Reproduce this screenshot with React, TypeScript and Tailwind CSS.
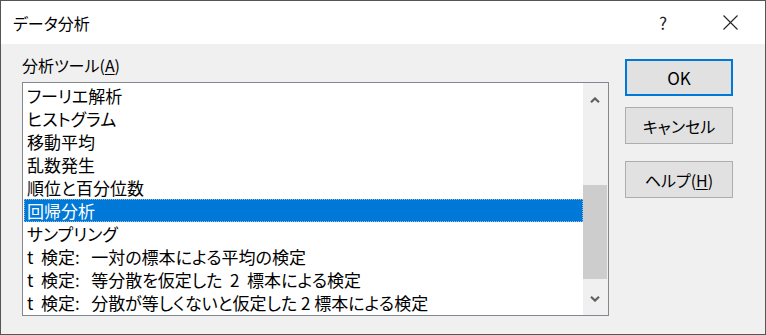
import React from 'react';

const items = [
  'フーリエ解析',
  'ヒストグラム',
  '移動平均',
  '乱数発生',
  '順位と百分位数',
  '回帰分析',
  'サンプリング',
  't  検定:   一対の標本による平均の検定',
  't  検定:   等分散を仮定した  2  標本による検定',
  't  検定:   分散が等しくないと仮定した 2 標本による検定',
];

const selected = 5;

const Chevron = ({ down }: { down?: boolean }) => (
  <svg width="10" height="6" viewBox="0 0 10 6" className={down ? 'rotate-180' : ''}>
    <polyline points="1,5.2 5,1.4 9,5.2" fill="none" stroke="#606060" strokeWidth="2.2" />
  </svg>
);

const Button = ({ children, primary }: { children: React.ReactNode; primary?: boolean }) => (
  <div
    className={
      primary
        ? 'flex h-[37px] w-[108px] items-center justify-center border-2 border-[#0078d7] bg-[#e1e1e1] text-[16px] text-black'
        : 'flex h-[37px] w-[108px] items-center justify-center border border-[#adadad] bg-[#e1e1e1] text-[16px] text-black'
    }
  >
    {children}
  </div>
);

export default function App() {
  return (
    <div className="flex h-[335px] w-[766px] flex-col border border-[#555] bg-[#f0f0f0] font-['Noto_Sans_CJK_JP','Noto_Sans',sans-serif] text-black [font-feature-settings:'palt']">
      {/* title bar */}
      <div className="flex h-[43px] shrink-0 items-center bg-white pl-[12px] pr-[27px]">
        <span className="flex-1 text-[16px] leading-none">データ分析</span>
        <span className="mr-[56px] text-[17px] leading-none text-[#222]">?</span>
        <svg width="15" height="15" viewBox="0 0 15 15">
          <path d="M0.5 0.5 L14.5 14.5 M14.5 0.5 L0.5 14.5" stroke="#222" strokeWidth="1.1" />
        </svg>
      </div>

      {/* body */}
      <div className="flex flex-1 pl-[21px]">
        <div className="flex w-[587px] flex-col pt-[10px]">
          <div className="mb-[6px] h-[22px] text-[16px] leading-[22px]">
            分析ツール(<span className="underline underline-offset-2">A</span>)
          </div>
          <div className="flex h-[234px] border border-[#828790] bg-white">
            <div className="flex flex-1 flex-col pl-px pt-px">
              {items.map((it, i) => (
                <div
                  key={it}
                  className={
                    i === selected
                      ? 'h-[23px] whitespace-pre border border-dotted border-[#9ab8d8] bg-[#0078d7] pl-[2px] text-[17px] leading-[21px] text-white'
                      : 'h-[23px] whitespace-pre pl-[3px] text-[17px] leading-[23px]'
                  }
                >
                  {it}
                </div>
              ))}
            </div>
            <div className="flex w-[25px] flex-col bg-[#f0f0f0] pr-px">
              <div className="flex h-[22px] items-end justify-center pb-[2px]">
                <Chevron />
              </div>
              <div className="flex-1">
                <div className="mt-[80px] h-[94px] bg-[#cdcdcd]" />
              </div>
              <div className="flex h-[22px] items-start justify-center pt-[3px]">
                <Chevron down />
              </div>
            </div>
          </div>
        </div>

        <div className="ml-[16px] flex flex-col pt-[15px]">
          <Button primary>
            <span className="text-[17px]">OK</span>
          </Button>
          <div className="mt-[11px]">
            <Button>キャンセル</Button>
          </div>
          <div className="mt-[17px]">
            <Button>
              <span>
                ヘルプ(<span className="underline underline-offset-2">H</span>)
              </span>
            </Button>
          </div>
        </div>
      </div>
    </div>
  );
}
